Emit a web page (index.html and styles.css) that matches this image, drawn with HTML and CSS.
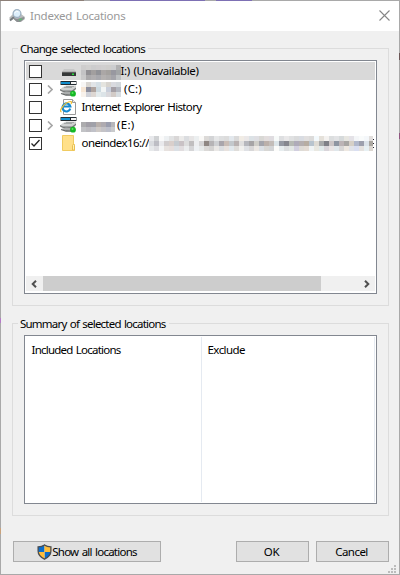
FILE: index.html
```html
<!DOCTYPE html>
<html lang="en">
<head>
<meta charset="utf-8">
<title>Indexed Locations</title>
<link rel="stylesheet" href="styles.css">
</head>
<body>
<svg width="0" height="0" class="defs">
  <defs>
    <symbol id="drive" viewBox="0 0 17 16">
      <rect x=".5" y="0" width="16" height="4" fill="#222b31"/>
      <rect x="1" y="1" width="9" height="2" fill="#138fce"/>
      <rect x="11" y="1" width="5" height="2" fill="#f4f4f4"/>
      <path d="M3 6L6 4.5h10v3l-3 3H2L0 8.500z" fill="#cfd1d1"/>
      <path d="M0 8l3 1.500h9l4-3v1.500l-3 3H3L0 9.500z" fill="#777a7a"/>
      <path d="M4 6.500h8M6 5.500h8" stroke="#a5a8a8" fill="none"/>
      <path d="M6 10.500l5 .5v2l-5 1-5-2z" fill="#a9acac"/>
      <path d="M1 12.500l5 1.500h5" stroke="#666969" stroke-width="1.300" fill="none"/>
      <circle cx="13" cy="12.700" r="2.900" fill="#14b824"/>
      <circle cx="12.500" cy="12" r="1" fill="#5be261"/>
    </symbol>
  </defs>
</svg>
<div class="window">
  <header class="titlebar">
    <svg class="app-icon" width="16" height="14" viewBox="0 0 16 14">
      <path d="M0 9l4-4h8l4 3v2l-4 3H8L5 10l-3 1z" fill="#b9bbbc"/>
      <path d="M5 9l3 1 7-2v2l-4 3H8L5 10.500z" fill="#8c9092"/>
      <path d="M5 8L1 11.500" stroke="#777c80" stroke-width="2"/>
      <circle cx="8" cy="4.600" r="3.900" fill="#dceefb" stroke="#9eb1c2" stroke-width="1.300"/>
      <path d="M5.500 4q2-3 4-1" stroke="#fff" fill="none"/>
      <path d="M10 11l3-1" stroke="#64b877" stroke-width="1.500"/>
    </svg>
    <span class="title" data-width="95.500">Indexed Locations</span>
    <svg class="close" width="11" height="11" viewBox="0 0 11 11"><path d="M.5.5l10 10M10.500.5l-10 10" stroke="#868686" stroke-width="1.100"/></svg>
  </header>
  <main class="content">
    <section class="group group-change">
      <h2 class="legend"><span data-width="125">Change selected locations</span></h2>
      <div class="listbox">
        <div class="row selected">
          <i class="check"></i><i class="expander"></i>
          <svg class="icon" width="17" height="16" viewBox="0 0 17 16">
            <path d="M4 6h10l2 3H2z" fill="#c7c8c8"/><rect x="2" y="9" width="14" height="4" rx=".5" fill="#353838"/><path d="M2 9.300h14" stroke="#666"/><rect x="12" y="10.500" width="2" height="1.500" fill="#26df3b"/>
          </svg>
          <svg class="mosaic low" width="41" height="15" data-cells="cecdcd d1d0cf cccccd cfcdce d0cfcf cfcecc cccdcf b1b1b2|c3c3c5 929195 a29f9f 929398 aba7a6 a5a29f 9898a0 a2a5a7|c9c9ca aaa9ab b0aeb0 a8a8ad b4b1b0 aeacac a4a4aa bcbfc1"></svg>
          <span class="name flush" data-width="78">I:) (Unavailable)</span>
        </div>
        <div class="row">
          <i class="check"></i><i class="expander"><svg width="6" height="9" viewBox="0 0 6 9"><path d="M1 .5l4 4-4 4" fill="none" stroke="#a6a6a6" stroke-width="1.600"/></svg></i>
          <svg class="icon drive" width="17" height="16"><use href="#drive"/></svg>
          <svg class="mosaic" width="41" height="15" data-cells="f7f6f5 d9d6d2 e1e4e7 d5dfe5 e4e4df d7d4cf d9dadf d2d7db|f6e6d5 8d8f9e b0a49f ccd9e0 f2f5f5 c9cfdb a5a0a6 b3b7c0|f8f2ec d0d2d9 ddd7d3 e4ebed dce4e8 dad9dd d2cbc7 d7dde1"></svg>
          <span class="name gap" data-width="18">(C:)</span>
        </div>
        <div class="row">
          <i class="check"></i><i class="expander"></i>
          <svg class="icon ie" width="17" height="16" viewBox="0 0 17 16">
            <path d="M3.500.5h9l3 3v12h-12z" fill="#fff" stroke="#999"/><path d="M12.500.5v3h3" fill="#eee" stroke="#999"/>
            <path d="M10.300 9.700A4 4 0 1 1 10.400 7.500H4" fill="none" stroke="#168ad0" stroke-width="2.100"/>
            <path d="M1.500 13C-2 12 5 3 10.500 2.500q2 0 .5 2.500" fill="none" stroke="#f1bf32" stroke-width="1.200"/>
          </svg>
          <span class="name" data-width="120">Internet Explorer History</span>
        </div>
        <div class="row">
          <i class="check"></i><i class="expander"><svg width="6" height="9" viewBox="0 0 6 9"><path d="M1 .5l4 4-4 4" fill="none" stroke="#a6a6a6" stroke-width="1.600"/></svg></i>
          <svg class="icon drive" width="17" height="16"><use href="#drive"/></svg>
          <svg class="mosaic low" width="34" height="10" data-cells="acacae a19fa7 a0a1a9 b8b0ac afabb0 9b9eae b7b7bb|c2c3c6 bcbbc0 c0c1c8 cec9c6 c4c3c7 bdbfca c9cacc"></svg>
          <span class="name gap" data-width="17.500">(E:)</span>
        </div>
        <div class="row">
          <i class="check"><svg width="11" height="11" viewBox="0 0 11 11"><path d="M1.500 5.500L4 8l5.500-6" fill="none" stroke="#222" stroke-width="1.300"/></svg></i><i class="expander"></i>
          <svg class="icon" width="17" height="16" viewBox="0 0 17 16"><path d="M2.500.5h11v9h1v6h-12z" fill="#ffe08a" stroke="#f0cb61"/><path d="M12.500 15V10.500q0-1 1-1t1 1V15z" fill="#fff0b6" stroke="#e9bf4e"/></svg>
          <span class="name" data-width="67.500">oneindex16://</span>
          <svg class="mosaic path" width="224" height="15" data-cells="e8e9ec d0d2d4 fafafa edf0f2 e2e3e4 d9d7d7 ecebea dbdde0 e7e5e5 eceff0 faf9f7 dcdad8 d3d4d6 e6e7e8 dedfe0 dcdcdc e3e8ed dadada f1ece5 ebe8e8 dce2e6 dfdfe3 d9d8d5 e2dddd dfdce0 f7faf9 dedfe1 e9e8e9 e0e1e2 dadbdc d9dce2 e1dfdf dcdbda f3f9fc e5e1da f4f2f0 dcdedf e2e3e5 d6dadb e7e6e1 e4e2e7 f4f6f8 f9fbfb f4f7fa e2dfdd|d9dbdf bdbdc4 e9e9ec d1cdce d9cfcb c6cbd0 c9c2c5 dddddd c0bebf edeef0 d5d4d5 8f8783 b6b4b6 ced0d3 a9a6ac c9bdb6 c3c8cc b9b2b2 e0dfdf b6b7bd a6a4a6 cfcec9 a4a5ac bbb0aa c3bdb9 dce5e9 9599a3 85868e b7bab5 afabb9 b5afb0 b7ada2 b8c4ce dedbd4 a8aaab 7f8087 cbc5c6 8d95a1 bcb4b6 a8a6a4 d6d0c7 b1b8cb 9da0ad dce3e9 aaa69f|e7e9eb dddde1 f4f5f6 e7e2df e6dedc dbe0e5 e1dddf ebedee d5d5d7 eef1f4 e7eaea dbd9d7 d4d3d2 eae8e6 dbdee1 e8e2de e1e8ed dfddda f1f0ee dfe1e5 d8d7d8 ece8e4 dbe0e5 d8d7d4 d3d5d7 fcfcfa e7edef dcdee0 e3e7e5 d2cfdf dedbd6 e4dcd5 f0f4f5 e9e8e1 e1eaeb d9d5da e9e4e4 e0e7eb d8d7d7 eee8e1 e1e3e9 dadff1 e5e2df e7f0f3 dcd7d1"></svg>
          <i class="cut"></i>
        </div>
        <div class="scrollbar">
          <svg class="arrow" width="6" height="8" viewBox="0 0 6 8"><path d="M5 .7L1.700 4 5 7.300" fill="none" stroke="#505050" stroke-width="2"/></svg>
          <div class="thumb"></div>
          <svg class="arrow right" width="6" height="8" viewBox="0 0 6 8"><path d="M1 .7L4.300 4 1 7.300" fill="none" stroke="#505050" stroke-width="2"/></svg>
        </div>
      </div>
    </section>
    <section class="group group-summary">
      <h2 class="legend"><span data-width="145.500">Summary of selected locations</span></h2>
      <div class="listbox table">
        <div class="column first"><span data-width="89">Included Locations</span></div>
        <div class="column last"><span data-width="37.500">Exclude</span></div>
      </div>
    </section>
    <footer class="buttons">
      <button class="show">
        <svg width="15" height="16" viewBox="0 0 15 16">
          <clipPath id="s"><path d="M7.500.7Q10 2.700 14 2.800V7q0 5-6.500 8.300Q1 12 1 7V2.800Q5 2.700 7.500.7z"/></clipPath>
          <g clip-path="url(#s)"><path d="M0 0h7.500v8H0zM7.500 8H15v8H7.500z" fill="#0a6dcc"/><path d="M7.500 0H15v8H7.500zM0 8h7.500v8H0z" fill="#ffbd38"/></g>
          <path d="M7.500.9Q10 2.800 13.900 2.900V7q0 5-6.400 8.200Q1.100 12 1.100 7V2.900Q5 2.800 7.500.9z" fill="none" stroke="#4c4e50" stroke-width="1.300"/>
        </svg><span data-width="84.500">Show all locations</span>
      </button>
      <button class="ok"><span data-width="15.500">OK</span></button>
      <button class="cancel"><span data-width="32.500">Cancel</span></button>
    </footer>
  </main>
  <svg class="grip" width="8" height="8" viewBox="0 0 8 8"><path d="M6 0h2v2H6zM3 3h2v2H3zM6 3h2v2H6zM0 6h2v2H0zM3 6h2v2H3zM6 6h2v2H6z" fill="#bcbcbc"/></svg>
</div>
<script src="script.js"></script>
</body>
</html>
```
FILE: styles.css
```css
* { box-sizing: border-box; }
body {
  margin: 0;
  font: 11.5px/18px "Noto Sans", "Open Sans", sans-serif;
  color: #000;
}
.defs { position: absolute; }
.window {
  position: relative;
  width: 400px;
  height: 575px;
  padding: 1px;
  background:
    linear-gradient(#f0f0f0, #f0f0f0) 1px 1px / 398px 573px no-repeat,
    linear-gradient(90deg, #8d8078 0 84px, #a9a9a9 84px 110px, #7d70b4 110px 205px, #a9a9a9 205px 216px, #7d70b4 216px 252px, #a9a9a9 252px) 0 0 / 400px 1px no-repeat,
    linear-gradient(#b57ac8, #b57ac8) 0 318px / 1px 5px no-repeat,
    linear-gradient(#c9a27c, #c9a27c) 0 528px / 1px 6px no-repeat,
    linear-gradient(#6b5555, #6b5555) 399px 53px / 1px 7px no-repeat,
    linear-gradient(#8f5580, #8f5580) 399px 133px / 1px 6px no-repeat,
    #a9a9a9;
  overflow: hidden;
}
.titlebar {
  display: flex;
  align-items: center;
  height: 30px;
  padding: 0 9px 0 8px;
  background: #fff;
  color: #999;
}
.title { margin-left: 5px; }
.close { margin: 0 0 2px auto; }
[data-width] { display: inline-block; white-space: nowrap; word-spacing: 1px; }
.content { padding: 17px 10px 0 11px; }
.group {
  border: 1px solid #dcdcdc;
  padding: 0 11px;
  width: 377px;
}
.group-change { height: 258px; }
.group-summary { height: 193px; margin-top: 17px; }
.legend {
  width: max-content;
  margin: -9px 0 0 -6px;
  padding: 0 3px 0 2px;
  height: 18px;
  font-size: 11.5px;
  font-weight: 400;
  line-height: 18px;
  background: #f0f0f0;
}
.listbox {
  display: flex;
  flex-direction: column;
  width: 353px;
  height: 234px;
  margin-top: 2px;
  padding: 1px;
  border: 1px solid #828790;
  background: #fff;
}
.row {
  display: flex;
  align-items: center;
  height: 18px;
  width: 349px;
  padding-left: 3px;
}
.row > * { flex: none; }
.selected { background: #d9d9d9; }
.check {
  display: block;
  width: 13px;
  height: 13px;
  border: 1px solid #333;
  background: #fff;
}
.check svg, .expander svg { display: block; }
.expander { width: 18px; padding-left: 5px; }
.icon { margin-right: 4.500px; }
.name { line-height: 18px; }
.mosaic { margin-right: -1px; margin-left: -1px; }
.low { margin-top: 3px; }
.flush { margin-left: 0; }
.gap { margin-left: 3.500px; }
.path { margin: 0; }
.cut { width: 1px; height: 9px; background: repeating-linear-gradient(#223 0 1px, transparent 1px 4px); }
.scrollbar {
  display: flex;
  align-items: center;
  height: 15px;
  margin-top: auto;
  margin-bottom: 1px;
  background: #f0f0f0;
}
.arrow { margin: 0 6px 0 5px; }
.right { margin: 0 5px 0 auto; }
.thumb { width: 278px; height: 15px; background: #cdcdcd; }
.table {
  flex-direction: row;
  height: 169px;
}
.column { flex: 1; padding: 4px 0 0 5.500px; }
.first { flex: 0 0 176px; border-right: 1px solid #e5eaf1; }
.last { border-right: 1px solid #e5eaf1; }
.buttons { display: flex; margin-top: 25px; padding-left: 1px; }
button {
  display: flex;
  align-items: center;
  justify-content: center;
  height: 21px;
  padding: 0;
  border: 1px solid #adadad;
  background: #e1e1e1;
  color: #000;
  font: inherit;
}
.show { width: 148px; }
.ok { width: 73px; margin-left: 75px; padding-right: 2px; }
.cancel { width: 73px; margin-left: 7px; padding-right: 2px; }
.grip { position: absolute; right: 4px; bottom: 2px; }
```
FILE: script.js
```js
// Fit each label to the width of its slot by adjusting the tracking.
document.querySelectorAll('[data-width]').forEach(function (el) {
  var target = parseFloat(el.dataset.width);
  var natural = el.getBoundingClientRect().width;
  el.style.letterSpacing = (target - natural) / el.textContent.length + 'px';
});

// Fill the pixelated patches that hide private names.
document.querySelectorAll('[data-cells]').forEach(function (svg) {
  svg.dataset.cells.split('|').forEach(function (line, y) {
    line.split(' ').forEach(function (color, x) {
      var cell = document.createElementNS('http://www.w3.org/2000/svg', 'rect');
      cell.setAttribute('x', x * 5);
      cell.setAttribute('y', y * 5);
      cell.setAttribute('width', 5);
      cell.setAttribute('height', 5);
      cell.setAttribute('fill', '#' + color);
      svg.appendChild(cell);
    });
  });
});
```
